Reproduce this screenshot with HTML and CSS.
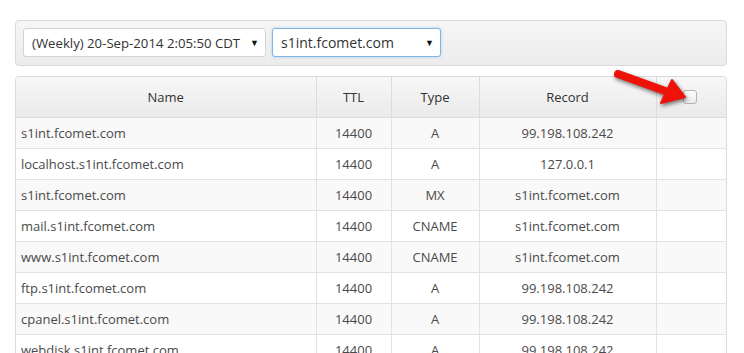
FILE: index.html
```html
<!DOCTYPE html>
<html lang="en">
<head>
    <meta charset="UTF-8">
    <title>Zone Records</title>
    <link rel="stylesheet" href="styles.css">
</head>
<body>
    <div class="toolbar">
        <div class="select-wrap backup">
            <select class="select">
                <option>(Weekly) 20-Sep-2014 2:05:50 CDT</option>
            </select>
        </div>
        <div class="select-wrap domain">
            <select class="select focused">
                <option>s1int.fcomet.com</option>
            </select>
        </div>
    </div>

    <div class="records">
        <table class="records-table">
            <colgroup>
                <col style="width: 300px">
                <col style="width: 75px">
                <col style="width: 88px">
                <col style="width: 177px">
                <col>
            </colgroup>
            <thead>
                <tr>
                    <th>Name</th>
                    <th>TTL</th>
                    <th>Type</th>
                    <th>Record</th>
                    <th class="check-col">
                        <svg class="pointer" width="80" height="40" viewBox="0 0 80 40">
                            <path d="M7 6 L57 24" stroke="#ee1209" stroke-width="8" stroke-linecap="round"/>
                            <polygon points="74,29 61,12 50,35" fill="#ee1209" stroke="#ee1209" stroke-width="2" stroke-linejoin="round"/>
                        </svg>
                        <span class="checkbox"></span>
                    </th>
                </tr>
            </thead>
            <tbody id="rows"></tbody>
        </table>
    </div>

    <script>
        const records = [
            ['s1int.fcomet.com', 14400, 'A', '99.198.108.242'],
            ['localhost.s1int.fcomet.com', 14400, 'A', '127.0.0.1'],
            ['s1int.fcomet.com', 14400, 'MX', 's1int.fcomet.com'],
            ['mail.s1int.fcomet.com', 14400, 'CNAME', 's1int.fcomet.com'],
            ['www.s1int.fcomet.com', 14400, 'CNAME', 's1int.fcomet.com'],
            ['ftp.s1int.fcomet.com', 14400, 'A', '99.198.108.242'],
            ['cpanel.s1int.fcomet.com', 14400, 'A', '99.198.108.242'],
            ['webdisk.s1int.fcomet.com', 14400, 'A', '99.198.108.242']
        ];

        const tbody = document.getElementById('rows');
        records.forEach(function (r) {
            const tr = document.createElement('tr');
            tr.innerHTML = '<td class="name">' + r[0] + '</td>' +
                '<td>' + r[1] + '</td>' +
                '<td>' + r[2] + '</td>' +
                '<td>' + r[3] + '</td>' +
                '<td></td>';
            tbody.appendChild(tr);
        });
    </script>
</body>
</html>
```

FILE: styles.css
```css
* { margin: 0; padding: 0; box-sizing: border-box; }
body {
    font-family: 'Open Sans', 'Liberation Sans', sans-serif;
    background: #fff;
    color: #444;
    padding: 20px 17px 0 15px;
}
.toolbar {
    display: flex;
    gap: 6px;
    padding: 7px;
    height: 46px;
    border: 1px solid #d9d9d9;
    border-radius: 4px;
    background: linear-gradient(#f6f6f6, #ececec);
}
.select-wrap { position: relative; }
.select-wrap::after {
    content: '\25BC';
    position: absolute;
    right: 7px;
    top: 8px;
    font-size: 9px;
    color: #111;
    pointer-events: none;
}
.backup .select { width: 243px; }
.domain .select { width: 169px; }
.select {
    appearance: none;
    -webkit-appearance: none;
    height: 29px;
    padding: 0 18px 0 8px;
    font-family: 'Open Sans', 'Liberation Sans', sans-serif;
    font-size: 13.2px;
    color: #333;
    background: #fff;
    border: 1px solid #d4d4d4;
    border-radius: 3px;
    outline: none;
}
.domain .select { font-size: 14px; }
.select.focused {
    border-color: #7fb4e6;
    box-shadow: 0 0 3px rgba(102, 175, 233, 0.5);
}
.records {
    margin-top: 10px;
    border: 1px solid #dcdcdc;
    border-radius: 4px 4px 0 0;
}
.records-table {
    width: 100%;
    border-collapse: collapse;
    table-layout: fixed;
    font-size: 13px;
}
.records-table th {
    font-weight: 400;
    color: #333;
    line-height: 20px;
    padding: 10px 5px;
    background: linear-gradient(#f7f7f7, #eaeaea);
    border-left: 1px solid #dcdcdc;
    border-bottom: 1px solid #dcdcdc;
}
.records-table th:first-child { border-left: 0; border-top-left-radius: 4px; }
.records-table th:last-child { border-top-right-radius: 4px; }
.records-table td {
    line-height: 20px;
    padding: 5px 5px;
    text-align: center;
    white-space: nowrap;
    color: #4a4a4a;
    border-left: 1px solid #e2e2e2;
    border-bottom: 1px solid #e2e2e2;
}
.records-table td:first-child { border-left: 0; }
.records-table td.name { text-align: left; padding-left: 5px; }
.records-table tbody tr:nth-child(odd) td { background: #f9f9f9; }
.check-col { position: relative; }
.checkbox {
    display: inline-block;
    width: 14px;
    height: 14px;
    margin: 3px 3px 0 0;
    vertical-align: top;
    border: 1px solid #b5b5b5;
    border-radius: 3px;
    background: linear-gradient(#fff, #ebebeb);
}
.pointer {
    position: absolute;
    left: -46px;
    top: -9px;
    filter: drop-shadow(1px 2px 2px rgba(0, 0, 0, 0.55));
}
```
